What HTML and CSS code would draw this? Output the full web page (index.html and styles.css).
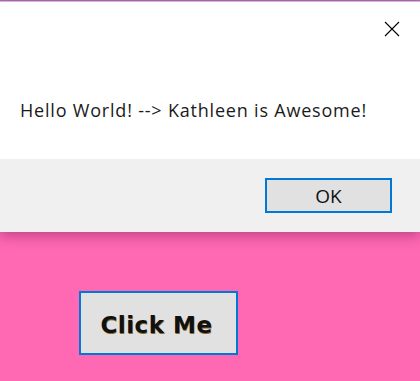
FILE: index.html
```html
<!DOCTYPE html>
<html lang="en">
  <head>
    <meta charset="UTF-8" />
    <meta name="viewport" content="width=device-width, initial-scale=1.0" />
    <title>Click Me</title>
    <link rel="stylesheet" href="styles.css">
  </head>

  <body>
    <div class="page">
      <button type="button" id="click-me">Click Me</button>
    </div>

    <div class="dialog" id="dialog">
      <div class="dialog-body">
        <button type="button" class="close" id="close">
          <svg width="16" height="16" viewBox="0 0 16 16">
            <path d="M1 1 L15 15 M15 1 L1 15" stroke="#000" stroke-width="1.1" fill="none" />
          </svg>
        </button>
        <p class="message">Hello World! --&gt; Kathleen is Awesome!</p>
      </div>
      <div class="dialog-footer">
        <button type="button" class="ok" id="ok">OK</button>
      </div>
    </div>

    <script>
      var dialog = document.getElementById("dialog");
      const hide = () => {
        dialog.style.display = "none";
      };
      document.getElementById("ok").addEventListener("click", hide);
      document.getElementById("close").addEventListener("click", hide);
      document.getElementById("click-me").addEventListener("click", () => {
        dialog.style.display = "block";
      });
    </script>
  </body>
</html>
```

FILE: styles.css
```css
html,
body {
  margin: 0;
  height: 100%;
}

body {
  background-color: #ff69b4;
  border-top: 1px solid #d85b9c;
  box-sizing: border-box;
  font-family: "Open Sans", "Noto Sans", sans-serif;
}

.page {
  padding: 290px 0 0 79px;
}

#click-me {
  width: 159px;
  height: 64px;
  background: #e1e1e1;
  border: 2px solid #0078d7;
  font-family: "DejaVu Sans", sans-serif;
  font-weight: bold;
  font-size: 23px;
  letter-spacing: 0.5px;
  color: #111;
  padding: 3px 4px 0 0;
  text-shadow: 0.5px 0.5px 0 #8a6a2a;
}

.dialog {
  position: absolute;
  top: 1px;
  left: 0;
  right: 0;
  border-top: 1px solid #a9c6ee;
  box-shadow: 0 4px 12px rgba(120, 20, 70, 0.45);
}

.dialog-body {
  position: relative;
  background: #fff;
  height: 157px;
  padding: 0 20px;
}

.close {
  position: absolute;
  top: 19px;
  right: 20px;
  background: none;
  border: none;
  padding: 0;
  width: 16px;
  height: 16px;
}

.message {
  margin: 0;
  padding-top: 96px;
  font-size: 18px;
  letter-spacing: 0.8px;
  color: #1a1a1a;
}

.dialog-footer {
  background: #f0f0f0;
  height: 73px;
  display: flex;
  justify-content: flex-end;
  align-items: flex-start;
  padding: 19px 28px 0 0;
  box-sizing: border-box;
}

.ok {
  width: 127px;
  height: 35px;
  background: #e1e1e1;
  border: 2px solid #0078d7;
  font-family: "Open Sans", "Noto Sans", sans-serif;
  font-size: 19px;
  color: #111;
  padding: 0;
}
```
